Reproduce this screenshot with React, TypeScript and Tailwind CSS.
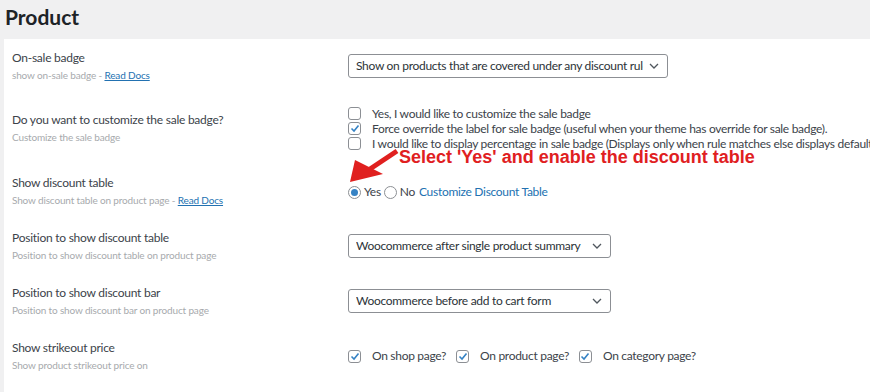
import React from "react";

const font = { fontFamily: 'Lato, "Noto Sans", sans-serif' };

function Chevron() {
  return (
    <svg width="10" height="6" viewBox="0 0 10 6" className="shrink-0">
      <path d="M1 1 L5 5 L9 1" fill="none" stroke="#50575e" strokeWidth="1.3" />
    </svg>
  );
}

function Select({ text, w }: { text: string; w: string }) {
  return (
    <div className={`${w} h-[24px] border border-[#8c8f94] rounded-[3px] bg-white flex items-center pl-[7px] pr-[8px] gap-[6px]`}>
      <span className="flex-1 overflow-hidden whitespace-nowrap text-[12px] tracking-[-0.3px] text-[#2c3338] leading-none">{text}</span>
      <Chevron />
    </div>
  );
}

function Box({ checked }: { checked?: boolean }) {
  return (
    <span className="w-[13px] h-[13px] border border-[#8c8f94] rounded-[3px] bg-white flex items-center justify-center shrink-0">
      {checked && (
        <svg width="10" height="9" viewBox="0 0 10 9">
          <path d="M1.5 4.5 L4 7 L8.5 1.5" fill="none" stroke="#3582c4" strokeWidth="1.6" />
        </svg>
      )}
    </span>
  );
}

function Radio({ checked }: { checked?: boolean }) {
  return (
    <span className="w-[13px] h-[13px] border border-[#8c8f94] rounded-full bg-white flex items-center justify-center shrink-0">
      {checked && <span className="w-[7px] h-[7px] rounded-full bg-[#3582c4]" />}
    </span>
  );
}

function Label({ title, sub, link }: { title: string; sub: string; link?: boolean }) {
  return (
    <div className="w-[336px] shrink-0 flex flex-col gap-[3px]">
      <div className="text-[12px] tracking-[-0.25px] text-[#3c434a] leading-[16px]">{title}</div>
      <div className="text-[10px] tracking-[-0.15px] text-[#a7aaad] leading-[13px]">
        {sub}
        {link && (
          <>
            {" - "}
            <span className="text-[#2271b1] underline">Read Docs</span>
          </>
        )}
      </div>
    </div>
  );
}

export default function App() {
  return (
    <div className="w-[870px] h-[392px] bg-[#f0f0f1] overflow-hidden relative" style={font}>
      <h1 className="h-[39px] pl-[5px] pt-[2px] text-[21px] font-bold text-[#1d2327] leading-[30px]">Product</h1>
      <div className="ml-[4px] bg-white h-[353px] pl-[8px]">
        <div className="h-[54px] flex items-center">
          <Label title="On-sale badge" sub="show on-sale badge" link />
          <Select w="w-[320px]" text="Show on products that are covered under any discount rule" />
        </div>
        <div className="h-[70px] flex items-center">
          <Label title="Do you want to customize the sale badge?" sub="Customize the sale badge" />
          <div className="flex flex-col text-[12px] tracking-[-0.3px] text-[#3c434a] leading-[15px] whitespace-nowrap">
            <div className="flex items-center gap-[11px] h-[15px]"><Box /><span>Yes, I would like to customize the sale badge</span></div>
            <div className="flex items-center gap-[11px] h-[15px]"><Box checked /><span>Force override the label for sale badge (useful when your theme has override for sale badge).</span></div>
            <div className="flex items-center gap-[11px] h-[15px]"><Box /><span>I would like to display percentage in sale badge (Displays only when rule matches else displays default sale badge)</span></div>
          </div>
        </div>
        <div className="h-[56px] flex items-center">
          <Label title="Show discount table" sub="Show discount table on product page" link />
          <div className="flex items-center gap-[3px] text-[12px] tracking-[-0.3px] text-[#3c434a] mt-[2px]">
            <Radio checked /><span>Yes</span>
            <Radio /><span>No</span>
            <span className="text-[#2271b1] ml-[1px]">Customize Discount Table</span>
          </div>
        </div>
        <div className="h-[54px] flex items-center">
          <Label title="Position to show discount table" sub="Position to show discount table on product page" />
          <Select w="w-[263px]" text="Woocommerce after single product summary" />
        </div>
        <div className="h-[56px] flex items-center">
          <Label title="Position to show discount bar" sub="Position to show discount bar on product page" />
          <Select w="w-[263px]" text="Woocommerce before add to cart form" />
        </div>
        <div className="h-[54px] flex items-center">
          <Label title="Show strikeout price" sub="Show product strikeout price on" />
          <div className="flex items-center text-[12px] tracking-[-0.3px] text-[#3c434a] whitespace-nowrap">
            <Box checked /><span className="ml-[11px] mr-[10px]">On shop page?</span>
            <Box checked /><span className="ml-[11px] mr-[10px]">On product page?</span>
            <Box checked /><span className="ml-[11px]">On category page?</span>
          </div>
        </div>
      </div>
      <div
        className="absolute left-[399px] top-[146px] text-[18px] font-bold text-[#e0201f] leading-[22px] whitespace-nowrap"
        style={{ fontFamily: '"Liberation Sans", Arial, sans-serif' }}
      >
        Select 'Yes' and enable the discount table
      </div>
      <svg className="absolute left-[340px] top-[145px]" width="65" height="45" viewBox="0 0 65 45">
        <line x1="57" y1="6" x2="30" y2="24" stroke="#e0201f" strokeWidth="5" />
        <polygon points="10,37 15,15 43,29" fill="#e0201f" />
      </svg>
    </div>
  );
}
